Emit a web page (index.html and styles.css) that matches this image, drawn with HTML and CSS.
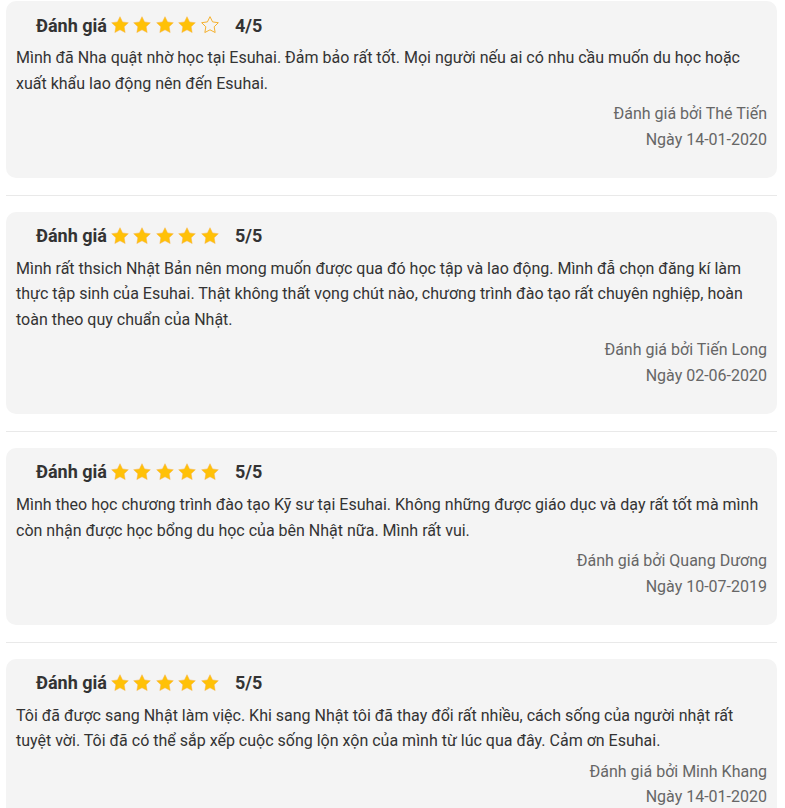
FILE: index.html
```html
<!DOCTYPE html>
<html>
<head>
<title>Đánh giá học viên</title>
<meta charset="UTF-8">
<link rel="stylesheet" href="styles.css">
</head>
<body>
  <div class="review-list">

    <div class="review-card">
      <div class="review-head">
        <span class="review-label">Đánh giá</span>
        <span class="stars">
          <svg class="star" viewBox="0 0 24 24"><path d="M12 2l3.09 6.26L22 9.27l-5 4.87 1.18 6.88L12 17.77l-6.18 3.25L7 14.14 2 9.27l6.91-1.01z"/></svg>
          <svg class="star" viewBox="0 0 24 24"><path d="M12 2l3.09 6.26L22 9.27l-5 4.87 1.18 6.88L12 17.77l-6.18 3.25L7 14.14 2 9.27l6.91-1.01z"/></svg>
          <svg class="star" viewBox="0 0 24 24"><path d="M12 2l3.09 6.26L22 9.27l-5 4.87 1.18 6.88L12 17.77l-6.18 3.25L7 14.14 2 9.27l6.91-1.01z"/></svg>
          <svg class="star" viewBox="0 0 24 24"><path d="M12 2l3.09 6.26L22 9.27l-5 4.87 1.18 6.88L12 17.77l-6.18 3.25L7 14.14 2 9.27l6.91-1.01z"/></svg>
          <svg class="star empty" viewBox="0 0 24 24"><path d="M12 2l3.09 6.26L22 9.27l-5 4.87 1.18 6.88L12 17.77l-6.18 3.25L7 14.14 2 9.27l6.91-1.01z"/></svg>
        </span>
        <span class="score">4/5</span>
      </div>
      <p class="review-text">Mình đã Nha quật nhờ học tại Esuhai. Đảm bảo rất tốt. Mọi người nếu ai có nhu cầu muốn du học hoặc xuất khẩu lao động nên đến Esuhai.</p>
      <div class="review-meta">
        <div>Đánh giá bởi Thé Tiến</div>
        <div>Ngày 14-01-2020</div>
      </div>
    </div>

    <hr class="divider">

    <div class="review-card">
      <div class="review-head">
        <span class="review-label">Đánh giá</span>
        <span class="stars">
          <svg class="star" viewBox="0 0 24 24"><path d="M12 2l3.09 6.26L22 9.27l-5 4.87 1.18 6.88L12 17.77l-6.18 3.25L7 14.14 2 9.27l6.91-1.01z"/></svg>
          <svg class="star" viewBox="0 0 24 24"><path d="M12 2l3.09 6.26L22 9.27l-5 4.87 1.18 6.88L12 17.77l-6.18 3.25L7 14.14 2 9.27l6.91-1.01z"/></svg>
          <svg class="star" viewBox="0 0 24 24"><path d="M12 2l3.09 6.26L22 9.27l-5 4.87 1.18 6.88L12 17.77l-6.18 3.25L7 14.14 2 9.27l6.91-1.01z"/></svg>
          <svg class="star" viewBox="0 0 24 24"><path d="M12 2l3.09 6.26L22 9.27l-5 4.87 1.18 6.88L12 17.77l-6.18 3.25L7 14.14 2 9.27l6.91-1.01z"/></svg>
          <svg class="star" viewBox="0 0 24 24"><path d="M12 2l3.09 6.26L22 9.27l-5 4.87 1.18 6.88L12 17.77l-6.18 3.25L7 14.14 2 9.27l6.91-1.01z"/></svg>
        </span>
        <span class="score">5/5</span>
      </div>
      <p class="review-text">Mình rất thsich Nhật Bản nên mong muốn được qua đó học tập và lao động. Mình đẫ chọn đăng kí làm thực tập sinh của Esuhai. Thật không thất vọng chút nào, chương trình đào tạo rất chuyên nghiệp, hoàn toàn theo quy chuẩn của Nhật.</p>
      <div class="review-meta">
        <div>Đánh giá bởi Tiến Long</div>
        <div>Ngày 02-06-2020</div>
      </div>
    </div>

    <hr class="divider">

    <div class="review-card">
      <div class="review-head">
        <span class="review-label">Đánh giá</span>
        <span class="stars">
          <svg class="star" viewBox="0 0 24 24"><path d="M12 2l3.09 6.26L22 9.27l-5 4.87 1.18 6.88L12 17.77l-6.18 3.25L7 14.14 2 9.27l6.91-1.01z"/></svg>
          <svg class="star" viewBox="0 0 24 24"><path d="M12 2l3.09 6.26L22 9.27l-5 4.87 1.18 6.88L12 17.77l-6.18 3.25L7 14.14 2 9.27l6.91-1.01z"/></svg>
          <svg class="star" viewBox="0 0 24 24"><path d="M12 2l3.09 6.26L22 9.27l-5 4.87 1.18 6.88L12 17.77l-6.18 3.25L7 14.14 2 9.27l6.91-1.01z"/></svg>
          <svg class="star" viewBox="0 0 24 24"><path d="M12 2l3.09 6.26L22 9.27l-5 4.87 1.18 6.88L12 17.77l-6.18 3.25L7 14.14 2 9.27l6.91-1.01z"/></svg>
          <svg class="star" viewBox="0 0 24 24"><path d="M12 2l3.09 6.26L22 9.27l-5 4.87 1.18 6.88L12 17.77l-6.18 3.25L7 14.14 2 9.27l6.91-1.01z"/></svg>
        </span>
        <span class="score">5/5</span>
      </div>
      <p class="review-text">Mình theo học chương trình đào tạo Kỹ sư tại Esuhai. Không những được giáo dục và dạy rất tốt mà mình còn nhận được học bổng du học của bên Nhật nữa. Mình rất vui.</p>
      <div class="review-meta">
        <div>Đánh giá bởi Quang Dương</div>
        <div>Ngày 10-07-2019</div>
      </div>
    </div>

    <hr class="divider">

    <div class="review-card">
      <div class="review-head">
        <span class="review-label">Đánh giá</span>
        <span class="stars">
          <svg class="star" viewBox="0 0 24 24"><path d="M12 2l3.09 6.26L22 9.27l-5 4.87 1.18 6.88L12 17.77l-6.18 3.25L7 14.14 2 9.27l6.91-1.01z"/></svg>
          <svg class="star" viewBox="0 0 24 24"><path d="M12 2l3.09 6.26L22 9.27l-5 4.87 1.18 6.88L12 17.77l-6.18 3.25L7 14.14 2 9.27l6.91-1.01z"/></svg>
          <svg class="star" viewBox="0 0 24 24"><path d="M12 2l3.09 6.26L22 9.27l-5 4.87 1.18 6.88L12 17.77l-6.18 3.25L7 14.14 2 9.27l6.91-1.01z"/></svg>
          <svg class="star" viewBox="0 0 24 24"><path d="M12 2l3.09 6.26L22 9.27l-5 4.87 1.18 6.88L12 17.77l-6.18 3.25L7 14.14 2 9.27l6.91-1.01z"/></svg>
          <svg class="star" viewBox="0 0 24 24"><path d="M12 2l3.09 6.26L22 9.27l-5 4.87 1.18 6.88L12 17.77l-6.18 3.25L7 14.14 2 9.27l6.91-1.01z"/></svg>
        </span>
        <span class="score">5/5</span>
      </div>
      <p class="review-text">Tôi đã được sang Nhật làm việc. Khi sang Nhật tôi đã thay đổi rất nhiều, cách sống của người nhật rất tuyệt vời. Tôi đã có thể sắp xếp cuộc sống lộn xộn của mình từ lúc qua đây. Cảm ơn Esuhai.</p>
      <div class="review-meta">
        <div>Đánh giá bởi Minh Khang</div>
        <div>Ngày 14-01-2020</div>
      </div>
    </div>

  </div>
</body>
</html>
```

FILE: styles.css
```css
body {
  margin: 0;
  background-color: #fff;
  font-family: Roboto, "Noto Sans", Arial, sans-serif;
  color: #333;
}
.review-list {
  padding: 1px 8px 0 6px;
}
.review-card {
  background-color: #f4f4f4;
  border-radius: 10px;
  padding: 10px 10px 25.3px;
}
.review-head {
  display: flex;
  align-items: center;
  padding-left: 20px;
  height: 28px;
  font-size: 18px;
  font-weight: bold;
  color: #333;
}
.stars {
  display: flex;
  gap: 2.5px;
  margin-left: 3px;
}
.star {
  width: 20px;
  height: 20px;
  fill: #ffc107;
  stroke: #f7b24a;
  stroke-width: 0.6;
}
/* ngôi sao rỗng */
.star.empty {
  fill: none;
  stroke: #f5b12f;
  stroke-width: 1.2;
}
.score {
  margin-left: 15px;
}
.review-text {
  margin: 6px 0 0;
  font-size: 16px;
  line-height: 1.6;
}
.review-meta {
  margin-top: 5px;
  text-align: right;
  font-size: 16px;
  line-height: 1.6;
  color: #666;
}
.divider {
  border: none;
  border-top: 1px solid #e9e9e9;
  margin: 17px 0 16px;
}
```
